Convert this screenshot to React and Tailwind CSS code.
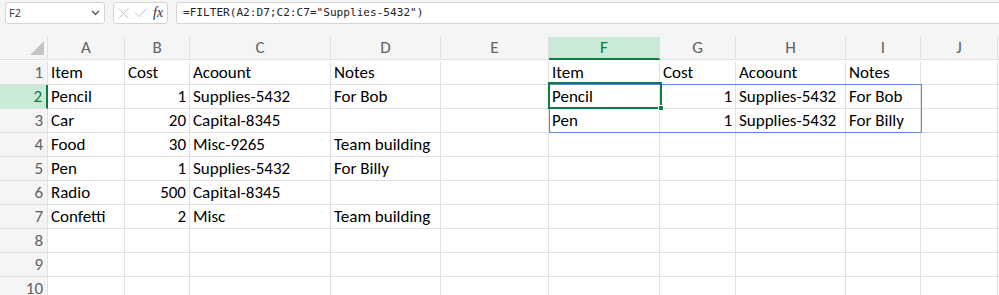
import React from "react";

const colWidths = [77, 65, 141, 110, 108, 111, 76, 110, 75, 77];
const letters = ["A", "B", "C", "D", "E", "F", "G", "H", "I", "J"];

// [text, rightAlign]
const rows = [
  [["Item"], ["Cost"], ["Acoount"], ["Notes"], [""], ["Item"], ["Cost"], ["Acoount"], ["Notes"], [""]],
  [["Pencil"], ["1", 1], ["Supplies-5432"], ["For Bob"], [""], ["Pencil"], ["1", 1], ["Supplies-5432"], ["For Bob"], [""]],
  [["Car"], ["20", 1], ["Capital-8345"], [""], [""], ["Pen"], ["1", 1], ["Supplies-5432"], ["For Billy"], [""]],
  [["Food"], ["30", 1], ["Misc-9265"], ["Team building"], [""], [""], [""], [""], [""], [""]],
  [["Pen"], ["1", 1], ["Supplies-5432"], ["For Billy"], [""], [""], [""], [""], [""], [""]],
  [["Radio"], ["500", 1], ["Capital-8345"], [""], [""], [""], [""], [""], [""], [""]],
  [["Confetti"], ["2", 1], ["Misc"], ["Team building"], [""], [""], [""], [""], [""], [""]],
  [[""], [""], [""], [""], [""], [""], [""], [""], [""], [""]],
  [[""], [""], [""], [""], [""], [""], [""], [""], [""], [""]],
  [[""], [""], [""], [""], [""], [""], [""], [""], [""], [""]],
];

const cellFont = { fontFamily: "Carlito, Lato, 'Open Sans', sans-serif" };

export default function App() {
  return (
    <div className="w-[999px] h-[295px] overflow-hidden bg-white relative">
      {/* formula bar */}
      <div className="h-[37px] bg-[#f5f5f5] flex items-start pt-[2px] pl-[5px] gap-[8px]">
        <div className="w-[100px] h-[22px] bg-white border border-[#d4d4d4] rounded-[3px] flex items-center justify-between pl-[3px] pr-[4px]">
          <span className="text-[11px] text-[#333]" style={{ fontFamily: "'Open Sans', sans-serif" }}>F2</span>
          <svg width="9" height="6" viewBox="0 0 9 6">
            <path d="M1 1 L4.5 4.5 L8 1" fill="none" stroke="#444" strokeWidth="1.2" />
          </svg>
        </div>
        <div className="w-[55px] h-[22px] bg-white border border-[#d4d4d4] rounded-[3px] flex items-center pl-[4px] gap-[6px]">
          <svg width="11" height="11" viewBox="0 0 11 11">
            <path d="M0.5 0.5 L10.5 10.5 M10.5 0.5 L0.5 10.5" stroke="#c2c2c2" strokeWidth="1" />
          </svg>
          <svg width="12" height="10" viewBox="0 0 12 10">
            <path d="M0.5 5 L4 8.5 L11.5 0.5" fill="none" stroke="#c2c2c2" strokeWidth="1" />
          </svg>
          <span className="italic text-[14px] leading-none text-[#333]" style={{ fontFamily: "'Liberation Serif', serif" }}>fx</span>
        </div>
        <div className="flex-1 h-[22px] bg-white border border-[#d4d4d4] rounded-l-[3px] border-r-0 flex items-center pl-[6px]">
          <span className="text-[11.1px] text-[#222]" style={{ fontFamily: "'DejaVu Sans Mono', monospace" }}>
            =FILTER(A2:D7;C2:C7="Supplies-5432")
          </span>
        </div>
      </div>

      {/* grid */}
      <div className="relative">
        <div
          className="grid"
          style={{ gridTemplateColumns: `48px ${colWidths.map((w) => w + "px").join(" ")} 1fr`, gridAutoRows: "24px" }}
        >
          {/* header row */}
          <div className="h-[23px] bg-[#f5f5f5] border-r border-b border-[#e1e1e1] relative">
            <svg className="absolute left-[30px] top-[4px]" width="15" height="15" viewBox="0 0 15 15">
              <path d="M14 0 L14 14 L0 14 Z" fill="#c4c4c4" />
            </svg>
          </div>
          {letters.map((l) =>
            l === "F" ? (
              <div
                key={l}
                className="h-[23px] bg-[#caead8] border-b-2 border-[#107c41] border-r border-r-[#e1e1e1] flex items-center justify-center text-[17px] text-[#107c41]"
                style={cellFont}
              >
                {l}
              </div>
            ) : (
              <div
                key={l}
                className="h-[23px] bg-[#f5f5f5] border-r border-b border-[#e1e1e1] flex items-center justify-center text-[17px] text-[#616161]"
                style={cellFont}
              >
                {l}
              </div>
            )
          )}
          <div className="h-[23px] bg-[#f5f5f5] border-b border-[#e1e1e1]" />

          {rows.map((r, ri) => (
            <React.Fragment key={ri}>
              {ri === 1 ? (
                <div
                  className="bg-[#caead8] border-r-2 border-r-[#107c41] border-b border-b-[#e1e1e1] flex items-center justify-end pr-[4px] text-[17px] text-[#107c41]"
                  style={cellFont}
                >
                  {ri + 1}
                </div>
              ) : (
                <div
                  className="bg-[#f5f5f5] border-r border-b border-[#e1e1e1] flex items-center justify-end pr-[4px] text-[17px] text-[#616161]"
                  style={cellFont}
                >
                  {ri + 1}
                </div>
              )}
              {r.map(([t, right], ci) => (
                <div
                  key={ci}
                  className={`border-r border-b border-[#e1e1e1] flex items-center whitespace-nowrap text-[17px] text-black ${
                    right ? "justify-end pr-[3px]" : "pl-[3px]"
                  }`}
                  style={cellFont}
                >
                  {t}
                </div>
              ))}
              <div className="border-b border-[#e1e1e1]" />
            </React.Fragment>
          ))}
        </div>

        {/* spill range border */}
        <div className="absolute left-[549px] top-[47px] w-[373px] h-[49px] border border-[#5b8bd8] pointer-events-none" />
        {/* active cell */}
        <div className="absolute left-[548px] top-[45px] w-[114px] h-[27px] border-2 border-[#107c41] pointer-events-none" />
        <div className="absolute left-[658px] top-[68px] w-[6px] h-[6px] bg-[#107c41] border border-white pointer-events-none" />
      </div>
    </div>
  );
}
